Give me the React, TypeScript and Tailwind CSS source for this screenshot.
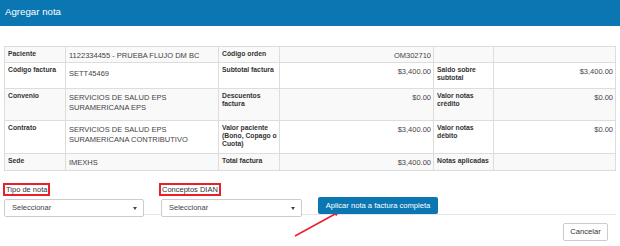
import React from "react";

const L = "font-bold text-[6.8px] leading-[8.2px] text-[#333] align-top pl-[3px] pr-[2px] pt-[3px]";
const V = "text-[7.5px] leading-[9.6px] text-[#444] align-top pl-[3px] pr-[2px] pt-[4px]";
const VR = "text-[7.5px] leading-[9.6px] text-[#444] align-top pr-[2px] pl-[2px] pt-[4px] text-right";
const td = "border border-[#ddd]";

function Select() {
  return (
    <div className="relative z-10 flex h-[18px] items-center justify-between rounded-[2px] border border-[#ccc] bg-white pl-[7px] pr-[6px] text-[7.5px] text-[#444]">
      <span>Seleccionar</span>
      <span className="h-0 w-0 border-x-[2.5px] border-t-[3px] border-x-transparent border-t-[#444]" />
    </div>
  );
}

export default function App() {
  return (
    <div
      className="relative h-[246px] w-[620px] overflow-hidden bg-white"
      style={{ fontFamily: '"Liberation Sans", Arial, sans-serif' }}
    >
      <div className="flex h-[26px] items-start bg-[#0a77b3] pl-[5px] pt-[6px] text-[9.7px] leading-[11px] text-white">
        Agregar nota
      </div>
      <div className="px-[4px] pt-[20px]">
        <table className="w-[611px] table-fixed border-collapse">
          <colgroup>
            <col className="w-[61px]" />
            <col className="w-[153px]" />
            <col className="w-[61px]" />
            <col className="w-[154px]" />
            <col className="w-[60px]" />
            <col className="w-[122px]" />
          </colgroup>
          <tbody>
            <tr className="h-[16px] bg-[#f9f9f9]">
              <td className={`${td} ${L}`}>Paciente</td>
              <td className={`${td} ${V} pt-[3px]`}>1122334455 - PRUEBA FLUJO DM BC</td>
              <td className={`${td} ${L}`}>Código orden</td>
              <td className={`${td} ${VR} pt-[3px]`}>OM302710</td>
              <td className={`${td}`}></td>
              <td className={`${td}`}></td>
            </tr>
            <tr className="h-[26px] bg-white">
              <td className={`${td} ${L}`}>Código factura</td>
              <td className={`${td} ${V} pt-[6px]`}>SETT45469</td>
              <td className={`${td} ${L}`}>Subtotal factura</td>
              <td className={`${td} ${VR}`}>$3,400.00</td>
              <td className={`${td} ${L}`}>Saldo sobre subtotal</td>
              <td className={`${td} ${VR}`}>$3,400.00</td>
            </tr>
            <tr className="h-[32px] bg-[#f9f9f9]">
              <td className={`${td} ${L}`}>Convenio</td>
              <td className={`${td} ${V}`}>SERVICIOS DE SALUD EPS SURAMERICANA EPS</td>
              <td className={`${td} ${L}`}>Descuentos factura</td>
              <td className={`${td} ${VR}`}>$0.00</td>
              <td className={`${td} ${L}`}>Valor notas crédito</td>
              <td className={`${td} ${VR}`}>$0.00</td>
            </tr>
            <tr className="h-[33px] bg-white">
              <td className={`${td} ${L}`}>Contrato</td>
              <td className={`${td} ${V}`}>SERVICIOS DE SALUD EPS SURAMERICANA CONTRIBUTIVO</td>
              <td className={`${td} ${L}`}>Valor paciente (Bono, Copago o Cuota)</td>
              <td className={`${td} ${VR}`}>$3,400.00</td>
              <td className={`${td} ${L}`}>Valor notas débito</td>
              <td className={`${td} ${VR}`}>$0.00</td>
            </tr>
            <tr className="h-[17px] bg-[#f9f9f9]">
              <td className={`${td} ${L}`}>Sede</td>
              <td className={`${td} ${V} pt-[3px]`}>IMEXHS</td>
              <td className={`${td} ${L}`}>Total factura</td>
              <td className={`${td} ${VR} pt-[3px]`}>$3,400.00</td>
              <td className={`${td} ${L}`}>Notas aplicadas</td>
              <td className={`${td}`}></td>
            </tr>
          </tbody>
        </table>

        <div className="relative z-10 mt-[12px] flex items-start">
          <div className="flex w-[140px] flex-col">
            <div className="mb-[3px] -ml-[1px] self-start border-2 border-[#e8202a] px-[1px] text-[7.5px] leading-[9px] text-[#333]">
              Tipo de nota
            </div>
            <Select />
          </div>
          <div className="ml-[17px] flex w-[141px] flex-col">
            <div className="mb-[3px] -ml-[2px] self-start border-2 border-[#e8202a] px-[1px] text-[7.5px] leading-[9px] text-[#333]">
              Conceptos DIAN
            </div>
            <Select />
          </div>
          <button className="ml-[16px] mt-[14px] flex h-[17px] w-[120px] items-center justify-center rounded-[2px] bg-[#0a77b3] text-[7.6px] text-white">
            Aplicar nota a factura completa
          </button>
        </div>
      </div>
      <div className="mx-[4px] -mt-[3px] flex justify-end border-t border-[#e5e5e5] pr-[8px] pt-[8px]">
        <button className="flex h-[18px] w-[45px] items-center justify-center rounded-[2px] border border-[#ccc] bg-white text-[7.6px] text-[#333]">
          Cancelar
        </button>
      </div>

      <svg
        className="pointer-events-none absolute left-0 top-0"
        width="620"
        height="246"
        viewBox="0 0 620 246"
      >
        <line x1="295" y1="236" x2="336" y2="213.5" stroke="#e8202a" strokeWidth="1.5" />
        <polygon points="340,211 336.2,216.3 333.4,211.5" fill="#e8202a" />
      </svg>
    </div>
  );
}
